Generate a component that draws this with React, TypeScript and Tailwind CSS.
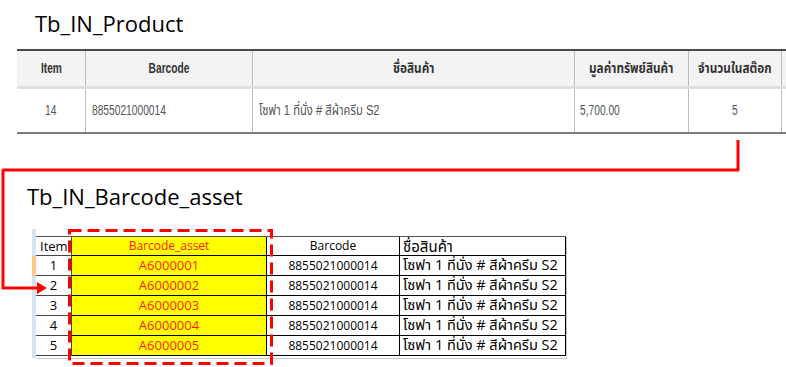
const sans = { fontFamily: '"Liberation Sans", "Noto Sans Thai", "Noto Sans", sans-serif' };
const calibri = { fontFamily: '"Open Sans", "Noto Sans Thai", "Noto Sans", sans-serif' };

const ASSETS = ['A6000001', 'A6000002', 'A6000003', 'A6000004', 'A6000005'];
const NAME = 'โซฟา 1 ที่นั่ง # สีผ้าครีม S2';
const BARCODE = '8855021000014';

// the web table uses a narrow face; squeeze the text so the widths match
function Squeeze({ children, thai, left }: { children: React.ReactNode; thai?: 'head' | 'body'; left?: boolean }) {
  const scale = thai === 'head' ? 'scale-x-[0.84]' : thai === 'body' ? 'scale-x-[0.8]' : 'scale-x-[0.73]';
  return (
    <span className={`inline-block whitespace-nowrap ${scale} ${left ? 'origin-left' : 'origin-center'}`}>{children}</span>
  );
}

function ProductTable() {
  const cols = 'grid grid-cols-[69px_167px_322px_114px_93px_1fr]';
  return (
    <div className="ml-[17px] border-t-2 border-[#4a4a4a]" style={sans}>
      <div className={`${cols} h-[38px] bg-[#f3f3f3] text-[14px] font-bold text-[#333] border-b-[3px] border-[#dedede]`}>
        <div className="flex items-center justify-center border-r border-[#bdbdbd]"><Squeeze>Item</Squeeze></div>
        <div className="flex items-center justify-center border-r border-[#bdbdbd]"><Squeeze>Barcode</Squeeze></div>
        <div className="flex items-center justify-center border-r border-[#bdbdbd]"><Squeeze thai="head">ชื่อสินค้า</Squeeze></div>
        <div className="flex items-center justify-center border-r border-[#bdbdbd]"><Squeeze thai="head">มูลค่าทรัพย์สินค้า</Squeeze></div>
        <div className="flex items-center justify-center border-r border-[#bdbdbd]"><Squeeze thai="head">จำนวนในสต๊อก</Squeeze></div>
        <div />
      </div>
      <div className={`${cols} h-[45px] bg-white text-[14px] text-[#555] border-b-2 border-[#7a7a7a]`}>
        <div className="flex items-center justify-center border-r border-[#bdbdbd]"><Squeeze>14</Squeeze></div>
        <div className="flex items-center pl-[6px] border-r border-[#bdbdbd]"><Squeeze left>{BARCODE}</Squeeze></div>
        <div className="flex items-center pl-[6px] border-r border-[#bdbdbd]"><Squeeze left thai="body">{NAME}</Squeeze></div>
        <div className="flex items-center pl-[5px] border-r border-[#bdbdbd]"><Squeeze left>5,700.00</Squeeze></div>
        <div className="flex items-center justify-center border-r border-[#bdbdbd]"><Squeeze>5</Squeeze></div>
        <div />
      </div>
    </div>
  );
}

function AssetTable() {
  const cols = 'grid grid-cols-[36px_195px_133px_166px]';
  return (
    <div className="flex ml-[32px] text-[12px] leading-none text-black" style={calibri}>
      <div className="w-[4px] flex flex-col">
        <div className="h-[27px] bg-[#d6e3f1]" />
        <div className="h-[20px] bg-[#f8c98a]" />
        <div className="h-[82px] bg-[#d6e3f1]" />
      </div>
      <div className="mt-[7px] w-[530px] shadow-[1px_1px_0_#c8c8c8]">
        <div className={`${cols} h-[20px] border-t border-[#555]`}>
          <div className="flex items-center pl-[4px] text-[13px] border-r border-b border-[#444]">Item</div>
          <div className="flex items-center justify-center bg-[#ffff00] text-[#ff1a1a] border-r border-b border-black">Barcode_asset</div>
          <div className="flex items-center justify-center border-r border-b border-black">Barcode</div>
          <div className="flex items-center pl-[3px] text-[15px] border-r border-b border-black">ชื่อสินค้า</div>
        </div>
        {ASSETS.map((a, i) => (
          <div key={a} className={`${cols} h-[20px]`}>
            <div className="flex items-center justify-center text-[13px] border-r border-b border-[#444]">{i + 1}</div>
            <div className="flex items-center justify-center bg-[#ffff00] text-[13px] text-[#ff1a1a] border-r border-b border-black">{a}</div>
            <div className="flex items-center justify-center border-r border-b border-black">{BARCODE}</div>
            <div className="flex items-center pl-[3px] text-[14.5px] border-r border-b border-black whitespace-nowrap">{NAME}</div>
          </div>
        ))}
      </div>
    </div>
  );
}

export default function App() {
  return (
    <div className="relative w-[786px] h-[367px] bg-white overflow-hidden">
      <h1 className="pt-[8px] pl-[35px] text-[22px] leading-[30px] text-black" style={calibri}>Tb_IN_Product</h1>
      <div className="mt-[11px]">
        <ProductTable />
      </div>
      <h2 className="mt-[47px] pl-[27px] text-[22px] leading-[30px] text-black" style={calibri}>Tb_IN_Barcode_asset</h2>
      <div className="mt-[18px]">
        <AssetTable />
      </div>

      {/* red connector + dashed highlight drawn over the tables */}
      <svg className="absolute inset-0 pointer-events-none" width="786" height="367">
        <polyline points="738,140 738,170 3,170 3,288 40,288" fill="none" stroke="#ff0000" strokeWidth="3" strokeLinejoin="round" />
        <polygon points="47,288 37,282 37,294" fill="#ff0000" />
        <rect x="69.5" y="230.5" width="202" height="133" fill="none" stroke="#ff0000" strokeWidth="3" strokeDasharray="12 6" />
      </svg>
    </div>
  );
}
